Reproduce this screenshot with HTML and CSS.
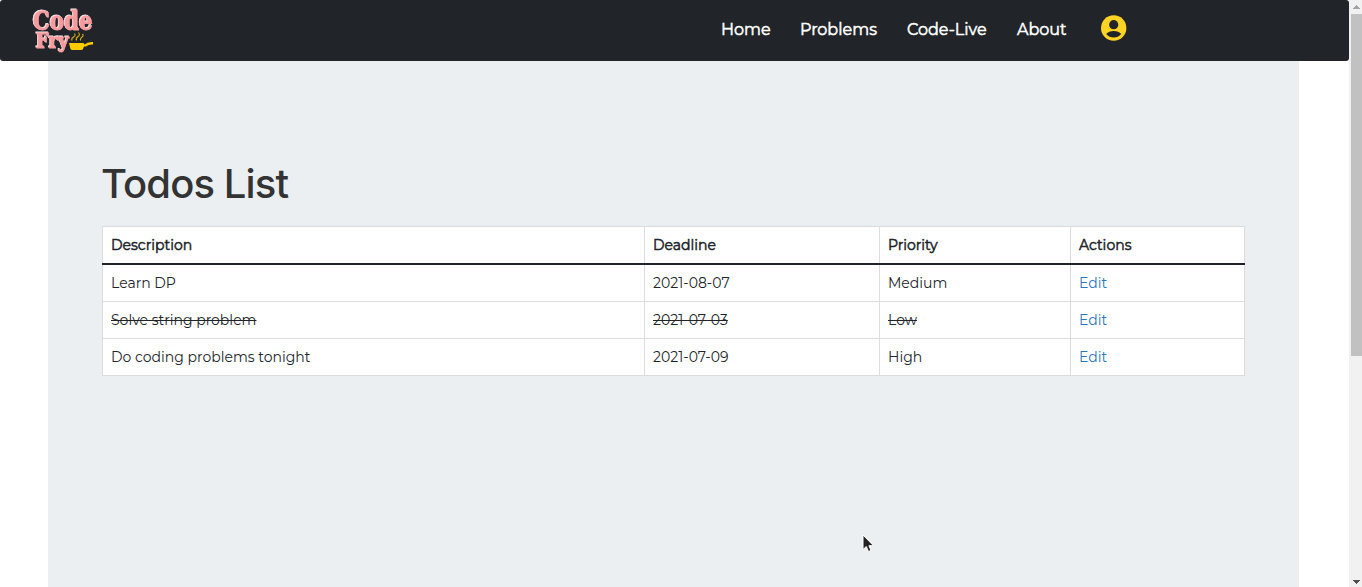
FILE: index.html
```html
<!DOCTYPE html>
<html lang="en">
<head>
<meta charset="utf-8">
<title>Code Fry</title>
<link rel="stylesheet" href="styles.css">
</head>
<body>
<div class="page">
  <nav class="navbar">
    <svg class="logo" width="64" height="48" viewBox="0 0 64 48" role="img" aria-label="Code Fry">
      <g class="logo-face">
        <text x="2" y="24" class="logo-code" textLength="60" lengthAdjust="spacingAndGlyphs">Code</text>
        <text x="5" y="41.500" class="logo-fry" textLength="33" lengthAdjust="spacingAndGlyphs">Fry</text>
      </g>
      <path class="pan" d="M38 37H52.500L53.500 38.500Q56.500 35.500 62 36V38.500Q58 38 55 40.500H53L52 43Q51.500 44 50 44H41.500Q40 44 39.500 43Z"/>
      <path class="steam" d="M41 34.500Q40 32.500 42.500 31T43.500 27.500M45.500 34.500Q44.500 32 47 30.500T47.500 26.500M49.500 34.500Q49 32.500 51 31T51.500 28"/>
    </svg>
    <div class="links">
      <a class="link home">Home</a>
      <a class="link problems">Problems</a>
      <a class="link live">Code-Live</a>
      <a class="link about">About</a>
      <svg class="avatar" width="26" height="26" viewBox="0 0 26 26">
        <circle class="avatar-disc" cx="12.700" cy="13" r="12.700"/>
        <circle class="avatar-cut" cx="12.700" cy="9.700" r="4.600"/>
        <path class="avatar-cut" d="M5.200 19Q7.700 16 12.700 16T20.200 19Q17.200 22.500 12.700 22.500T5.200 19Z"/>
      </svg>
    </div>
  </nav>
  <main class="content">
    <h1 class="title">Todos List</h1>
    <table class="todos">
      <colgroup><col class="c1"><col class="c2"><col class="c3"><col class="c4"></colgroup>
      <thead>
        <tr><th>Description</th><th>Deadline</th><th>Priority</th><th>Actions</th></tr>
      </thead>
      <tbody>
        <tr><td>Learn DP</td><td>2021-08-07</td><td>Medium</td><td><a class="edit">Edit</a></td></tr>
        <tr class="done"><td>Solve string problem</td><td>2021-07-03</td><td>Low</td><td><a class="edit">Edit</a></td></tr>
        <tr><td>Do coding problems tonight</td><td>2021-07-09</td><td>High</td><td><a class="edit">Edit</a></td></tr>
      </tbody>
    </table>
  </main>
</div>
<div class="scrollbar">
  <svg class="arrow up" width="13" height="14" viewBox="0 0 13 14"><path d="M4 9H11V8H10V7H9V6H8V5H7V6H6V7H5V8H4Z"/></svg>
  <div class="thumb"></div>
  <svg class="arrow down" width="13" height="14" viewBox="0 0 13 14"><path d="M4 7H11V8H10V9H9V10H8V11H7V10H6V9H5V8H4Z"/></svg>
</div>
<svg class="cursor" width="14" height="20" viewBox="0 0 14 20"><path d="M1 1V15.500L4.300 12.500L6.500 17.500L9 16.400L6.900 11.700H11.500Z"/></svg>
</body>
</html>
```
FILE: styles.css
```css
* { box-sizing: border-box; }
body {
  margin: 0;
  height: 587px;
  overflow: hidden;
  display: flex;
  background: #fff;
  font-family: Montserrat, Inter, sans-serif;
  color: #212529;
}
.page { width: 1349px; height: 587px; display: flex; flex-direction: column; }
.navbar {
  height: 61px;
  flex: none;
  display: flex;
  justify-content: space-between;
  background: #212529;
  border-radius: 3px;
  padding: 6px 222px 0 31px;
}
.logo { display: block; overflow: visible; }
.logo-code { font: bold 26px "DejaVu Serif", serif; }
.logo-fry { font: bold 19.500px "DejaVu Serif", serif; }
.logo-face { fill: #f69a9e; stroke: #f69a9e; stroke-width: 0.8; filter: drop-shadow(-0.5px -0.5px 0 #fbe3e4); }
.pan { fill: #fc0; }
.steam { fill: none; stroke: #d9b10c; stroke-width: 1.1; }
.links { display: flex; height: 46px; align-items: center; }
.link { font-size: 16px; font-weight: 400; -webkit-text-stroke: 0.5px #fff; color: #fff; white-space: nowrap; margin-right: 30px; }
.home { width: 49px; }
.problems { width: 77px; }
.live { width: 80px; }
.about { width: 50px; margin-right: 34px; }
.avatar { display: block; margin-top: -3px; }
.avatar-disc { fill: #ffd323; }
.avatar-cut { fill: #212529; }
.content {
  flex: 1;
  margin: 0 50px 0 48px;
  padding: 93px 54px 0;
  background: #ebeff2;
}
.title {
  margin: 0 0 12px -1px;
  height: 60px;
  line-height: 60px;
  font-family: Inter, sans-serif;
  font-size: 40px;
  font-weight: 500;
  letter-spacing: -0.9px;
  color: #333;
}
.todos {
  width: 1143px;
  table-layout: fixed;
  border-collapse: collapse;
  background: #fff;
  font-size: 14px;
}
.c1 { width: 542px; }
.c2 { width: 235px; }
.c3 { width: 191px; }
.c4 { width: 174px; }
.todos th, .todos td {
  padding: 8px;
  line-height: 20px;
  text-align: left;
  border: 1px solid #dcdcdc;
}
.todos th { font-weight: 400; -webkit-text-stroke: 0.5px #212529; border-bottom: 2px solid #212529; }
.done td { text-decoration: line-through; }
.done td:last-child { text-decoration: none; }
.edit { color: #2b76c4; }
.scrollbar { width: 13px; height: 587px; display: flex; flex-direction: column; background: #f1f1f1; }
.thumb { height: 342px; margin-left: 2px; background: #c1c1c1; }
.arrow { display: block; }
.up { fill: #a3a3a3; }
.down { fill: #505050; margin-top: auto; }
.cursor { position: absolute; left: 862px; top: 534px; fill: #222; stroke: #fff; stroke-width: 1; }
```
